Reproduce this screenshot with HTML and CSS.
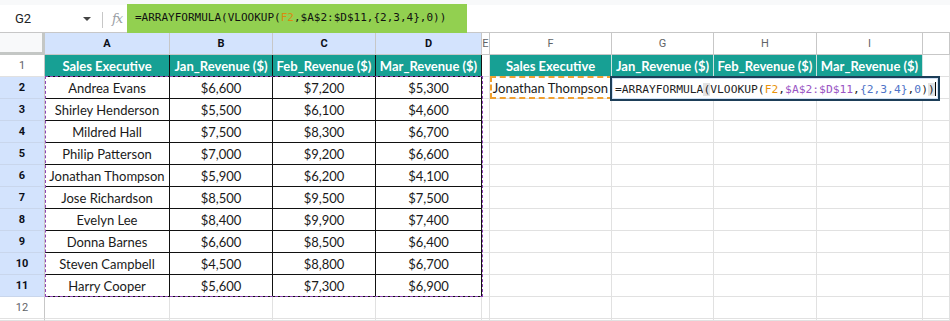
FILE: index.html
```html
<!DOCTYPE html>
<html>
<head>
<meta charset="utf-8">
<link rel="stylesheet" href="styles.css">
</head>
<body>
<div class="fbar">
  <div class="namebox"><span class="ref">G2</span><span class="caret"></span></div>
  <div class="sep"></div>
  <div class="fx">fx</div>
  <div class="formula">=ARRAYFORMULA(VLOOKUP(<span class="o">F2</span>,$A$2:$D$11,{2,3,4},0))</div>
</div>
<div class="wrap">
<div class="sheet">
  <div class="corner"></div>
  <div class="ch sel">A</div><div class="ch sel">B</div><div class="ch sel">C</div><div class="ch sel">D</div>
  <div class="ch">E</div><div class="ch">F</div><div class="ch">G</div><div class="ch">H</div><div class="ch">I</div><div class="ch"></div>

  <div class="rh">1</div>
  <div class="c th">Sales Executive</div><div class="c th">Jan_Revenue ($)</div><div class="c th">Feb_Revenue ($)</div><div class="c th">Mar_Revenue ($)</div>
  <div class="c"></div>
  <div class="c th2">Sales Executive</div><div class="c th2">Jan_Revenue ($)</div><div class="c th2">Feb_Revenue ($)</div><div class="c th2">Mar_Revenue ($)</div>
  <div class="c"></div>

  <div class="rh sel">2</div>
  <div class="c d">Andrea Evans</div><div class="c d">$6,600</div><div class="c d">$7,200</div><div class="c d">$5,300</div>
  <div class="c"></div><div class="c">Jonathan Thompson</div><div class="c"></div><div class="c"></div><div class="c"></div><div class="c"></div>

  <div class="rh sel">3</div>
  <div class="c d">Shirley Henderson</div><div class="c d">$5,500</div><div class="c d">$6,100</div><div class="c d">$4,600</div>
  <div class="c"></div><div class="c"></div><div class="c"></div><div class="c"></div><div class="c"></div><div class="c"></div>

  <div class="rh sel">4</div>
  <div class="c d">Mildred Hall</div><div class="c d">$7,500</div><div class="c d">$8,300</div><div class="c d">$6,700</div>
  <div class="c"></div><div class="c"></div><div class="c"></div><div class="c"></div><div class="c"></div><div class="c"></div>

  <div class="rh sel">5</div>
  <div class="c d">Philip Patterson</div><div class="c d">$7,000</div><div class="c d">$9,200</div><div class="c d">$6,600</div>
  <div class="c"></div><div class="c"></div><div class="c"></div><div class="c"></div><div class="c"></div><div class="c"></div>

  <div class="rh sel">6</div>
  <div class="c d">Jonathan Thompson</div><div class="c d">$5,900</div><div class="c d">$6,200</div><div class="c d">$4,100</div>
  <div class="c"></div><div class="c"></div><div class="c"></div><div class="c"></div><div class="c"></div><div class="c"></div>

  <div class="rh sel">7</div>
  <div class="c d">Jose Richardson</div><div class="c d">$8,500</div><div class="c d">$9,500</div><div class="c d">$7,500</div>
  <div class="c"></div><div class="c"></div><div class="c"></div><div class="c"></div><div class="c"></div><div class="c"></div>

  <div class="rh sel">8</div>
  <div class="c d">Evelyn Lee</div><div class="c d">$8,400</div><div class="c d">$9,900</div><div class="c d">$7,400</div>
  <div class="c"></div><div class="c"></div><div class="c"></div><div class="c"></div><div class="c"></div><div class="c"></div>

  <div class="rh sel">9</div>
  <div class="c d">Donna Barnes</div><div class="c d">$6,600</div><div class="c d">$8,500</div><div class="c d">$6,400</div>
  <div class="c"></div><div class="c"></div><div class="c"></div><div class="c"></div><div class="c"></div><div class="c"></div>

  <div class="rh sel">10</div>
  <div class="c d">Steven Campbell</div><div class="c d">$4,500</div><div class="c d">$8,800</div><div class="c d">$6,700</div>
  <div class="c"></div><div class="c"></div><div class="c"></div><div class="c"></div><div class="c"></div><div class="c"></div>

  <div class="rh sel">11</div>
  <div class="c d">Harry Cooper</div><div class="c d">$5,600</div><div class="c d">$7,300</div><div class="c d">$6,900</div>
  <div class="c"></div><div class="c"></div><div class="c"></div><div class="c"></div><div class="c"></div><div class="c"></div>

  <div class="rh">12</div>
  <div class="c"></div><div class="c"></div><div class="c"></div><div class="c"></div>
  <div class="c"></div><div class="c"></div><div class="c"></div><div class="c"></div><div class="c"></div><div class="c"></div>

  <div class="rh"></div>
  <div class="c"></div><div class="c"></div><div class="c"></div><div class="c"></div>
  <div class="c"></div><div class="c"></div><div class="c"></div><div class="c"></div><div class="c"></div><div class="c"></div>
</div>
<div class="overlay">
  <div class="copy-range"></div>
  <div class="ref-range"></div>
  <div class="editor">=ARRAYFORMULA<span class="pm">(</span>VLOOKUP(<span class="o">F2</span>,<span class="p">$A$2:$D$11</span>,<span class="b">{2,3,4}</span>,<span class="b">0</span>)<span class="pm">)</span><span class="cur"></span></div>
</div>
</div>
</body>
</html>
```

FILE: styles.css
```css
* { box-sizing: border-box; }
html, body { margin: 0; padding: 0; background: #fff; }
body { width: 950px; height: 321px; overflow: hidden; font-family: Roboto, "Liberation Sans", sans-serif; }

.fbar {
  height: 33px;
  display: flex;
  align-items: flex-start;
  background: linear-gradient(#f8f9fa 0 5px, #fff 5px);
  border-bottom: 1px solid #c7c7c7;
}
.namebox {
  width: 100px;
  height: 32px;
  display: flex;
  align-items: center;
  padding-top: 5px;
  padding-left: 15px;
  font-size: 13px;
  color: #202124;
}
.namebox .ref { flex: 1; }
.caret {
  width: 0; height: 0;
  border-left: 4px solid transparent;
  border-right: 4px solid transparent;
  border-top: 4px solid #444;
  margin-right: 9px;
  margin-top: 1px;
}
.sep { width: 1px; height: 16px; background: #c7c7c7; margin-top: 12px; margin-left: 2px; }
.fx {
  width: 24px;
  height: 32px;
  padding-top: 11px;
  padding-left: 9px;
  font-family: "DejaVu Serif", "Liberation Serif", serif;
  font-style: italic;
  font-size: 13px;
  color: #9aa0a6;
  letter-spacing: -1px;
}
.formula {
  margin-top: 4px;
  width: 340px;
  height: 29px;
  background: #92d050;
  padding-left: 8px;
  padding-top: 7px;
  font-family: "DejaVu Sans Mono", monospace;
  font-size: 11px;
  color: #111;
  white-space: nowrap;
}
.o { color: #e8930c; }
.formula .o { color: #d98a10; }
.p { color: #9a55c4; }
.b { color: #4f74c8; }

.wrap { position: relative; }
.sheet, .overlay {
  display: grid;
  grid-template-columns: 45px 125px 103px 103px 106px 8px 122px 102px 103px 106px 1fr;
  grid-template-rows: repeat(13, 22px) 2px;
}
.overlay {
  position: absolute;
  inset: 0;
  pointer-events: none;
}
.corner {
  background: #f8f9fa;
  border-right: 3px solid #c4c7c5;
  border-bottom: 3px solid #c4c7c5;
}
.ch {
  border-right: 1px solid #c7c7c7;
  border-bottom: 1px solid #c7c7c7;
  font-size: 11px;
  color: #5f6368;
  display: flex;
  align-items: center;
  justify-content: center;
}
.ch.sel { background: #d3e3fd; color: #0b0f19; font-weight: bold; }
.rh {
  border-right: 1px solid #c7c7c7;
  border-bottom: 1px solid #e1e1e1;
  font-size: 11px;
  color: #5f6368;
  display: flex;
  align-items: center;
  justify-content: center;
  overflow: hidden;
}
.rh.sel { background: #d3e3fd; color: #0b0f19; font-weight: bold; border-bottom-color: #c9d6ec; }

.c {
  border-right: 1px solid #e1e1e1;
  border-bottom: 1px solid #e1e1e1;
  font-family: Lato, "Open Sans", sans-serif;
  font-size: 13px;
  color: #1a1a1a;
  display: flex;
  align-items: center;
  justify-content: center;
  white-space: nowrap;
  overflow: hidden;
}
.th {
  background: #17a094;
  color: #fff;
  font-weight: bold;
  border-right-color: #111;
  border-bottom-color: #111;
}
.th2 {
  background: #17a094;
  color: #fff;
  font-weight: bold;
  border-right-color: #cfe3e0;
  border-bottom-color: #e1e1e1;
}
.d { border-right-color: #111; border-bottom-color: #111; }

.copy-range {
  grid-area: 3 / 2 / 13 / 6;
  margin-top: -1px;
  margin-right: -1px;
  border: 1px dashed #8e44b5;
}
.ref-range {
  grid-area: 3 / 7 / 4 / 8;
  margin-top: -1px;
  margin-right: -1px;
  border: 2px dashed #f0a030;
}
.editor {
  grid-area: 3 / 8 / 4 / 9;
  justify-self: start;
  align-self: start;
  width: 330px;
  height: 25px;
  margin-top: -1px;
  margin-left: -2px;
  background: #fff;
  border: 2px solid #1d3e58;
  box-shadow: inset 0 0 0 1px #cfe0f5;
  padding-left: 3px;
  padding-top: 4px;
  font-family: "DejaVu Sans Mono", monospace;
  font-size: 11.3px;
  color: #1f1f1f;
  white-space: nowrap;
}
.pm { background: #e3e3e3; }
.cur {
  display: inline-block;
  width: 1px;
  height: 14px;
  background: #000;
  vertical-align: -3px;
}
```
